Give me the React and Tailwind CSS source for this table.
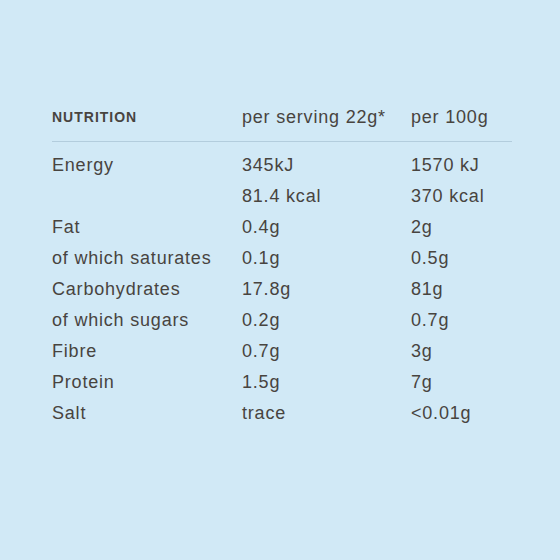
const rows = [
  ['Energy', '345kJ', '1570 kJ'],
  ['', '81.4 kcal', '370 kcal'],
  ['Fat', '0.4g', '2g'],
  ['of which saturates', '0.1g', '0.5g'],
  ['Carbohydrates', '17.8g', '81g'],
  ['of which sugars', '0.2g', '0.7g'],
  ['Fibre', '0.7g', '3g'],
  ['Protein', '1.5g', '7g'],
  ['Salt', 'trace', '<0.01g'],
];

export default function App() {
  return (
    <div className="w-[560px] h-[560px] bg-[#d1e9f6] pl-[52px] pr-[48px] pt-[101px] text-[#48443f]" style={{ fontFamily: '"Liberation Sans", Arial, sans-serif' }}>
      <div className="grid grid-cols-[190px_169px_1fr] items-center h-[32px] border-b border-[#b3cddd] pb-[8px] box-content">
        <div className="text-[14px] font-bold tracking-[1px]">NUTRITION</div>
        <div className="text-[18px] tracking-[0.8px]">per serving 22g*</div>
        <div className="text-[18px] tracking-[0.8px]">per 100g</div>
      </div>
      <div className="pt-[8px]">
        {rows.map((r, i) => (
          <div key={i} className="grid grid-cols-[190px_169px_1fr] h-[31px] items-center text-[18px] tracking-[0.8px]">
            <div>{r[0]}</div>
            <div>{r[1]}</div>
            <div>{r[2]}</div>
          </div>
        ))}
      </div>
    </div>
  );
}
